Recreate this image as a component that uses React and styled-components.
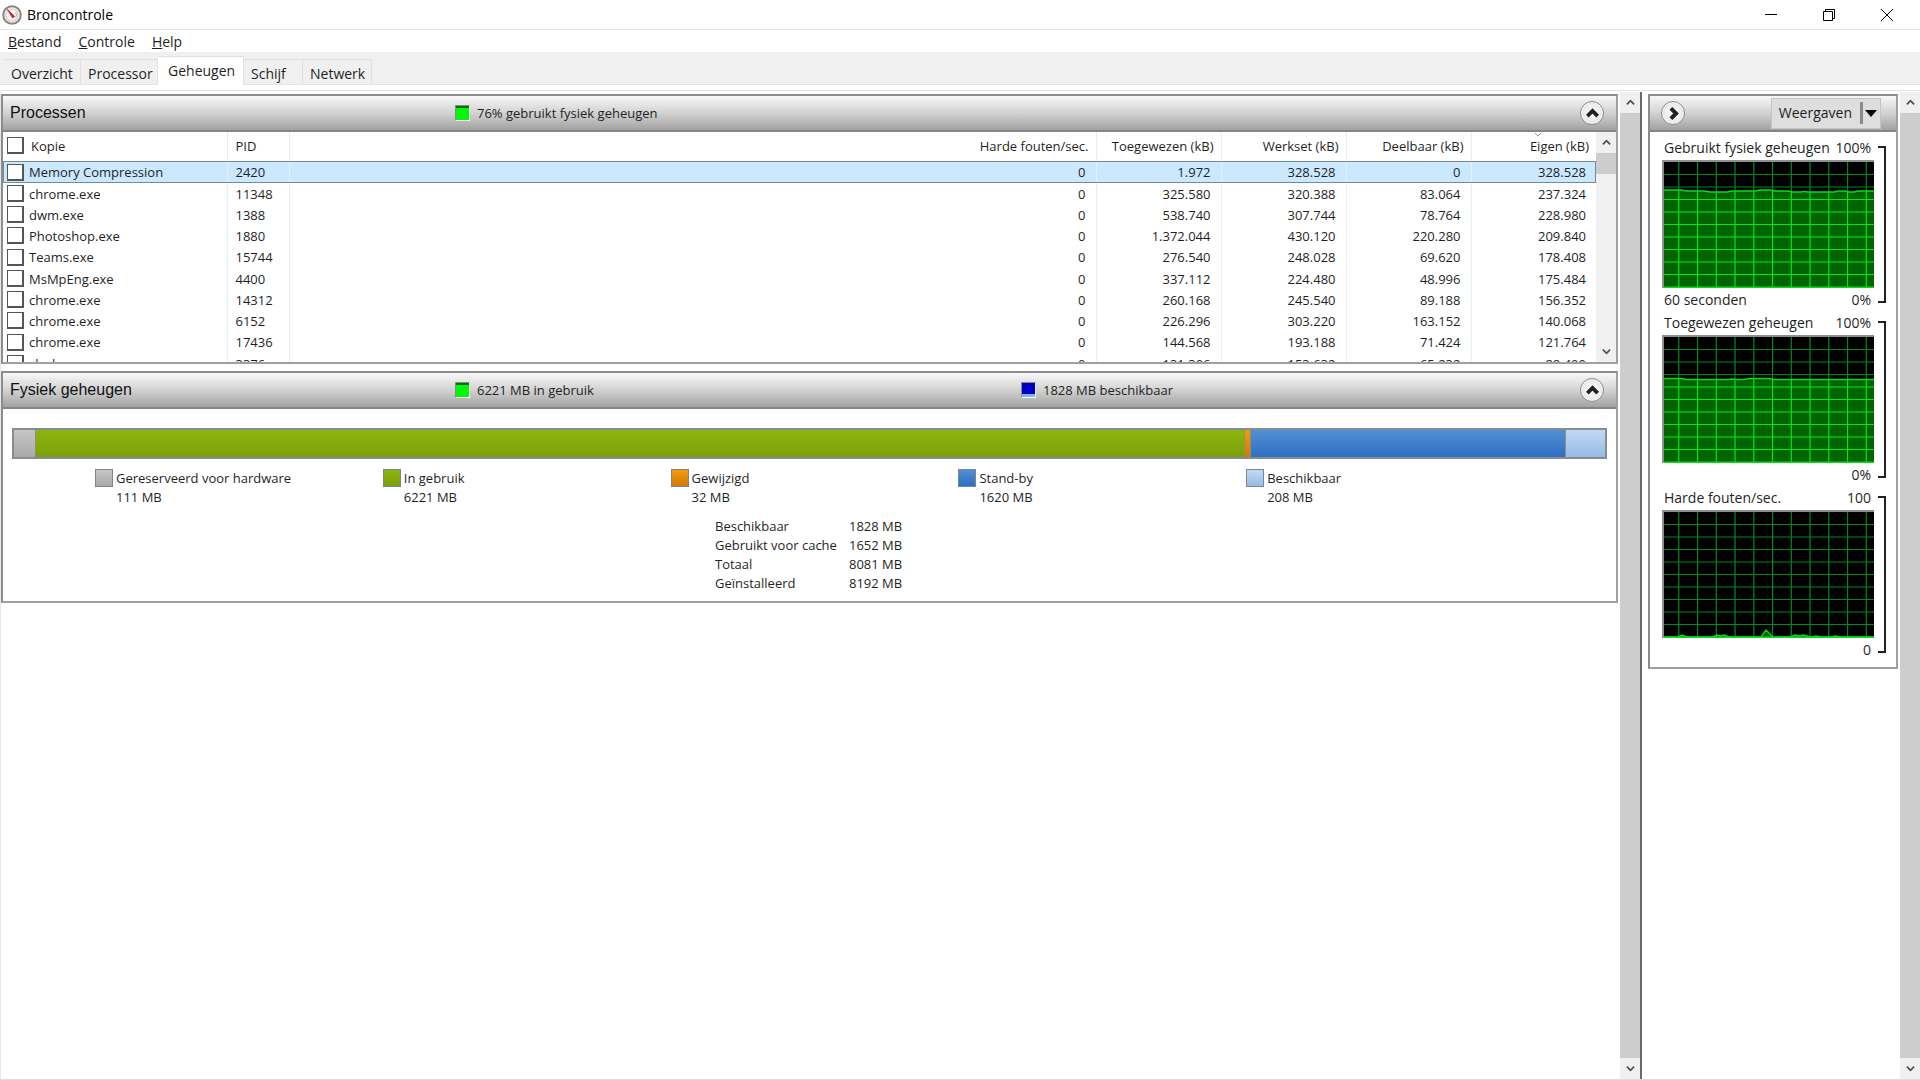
import React from "react";
import styled, { createGlobalStyle, css } from "styled-components";

const GlobalStyle = createGlobalStyle`
  * { box-sizing: border-box; }
  body {
    margin: 0;
    background: #fff;
    color: #1f1f1f;
    font: 14px/20px "Open Sans", "Noto Sans", sans-serif;
  }
  button { font: inherit; color: inherit; padding: 0; border: 0; background: none; }
  h2, p, dl, dd, dt, ul { margin: 0; padding: 0; }
`;

const Window = styled.div`
  display: flex;
  flex-direction: column;
  height: 100vh;
  overflow: hidden;
  border-bottom: 1px solid #dcdcdc;
`;

const TitleBar = styled.header`
  display: flex;
  align-items: center;
  height: 30px;
  padding: 0 4px 0 2px;
  border-bottom: 1px solid #dfe5e3;
  color: #000;
`;

const AppTitle = styled.span`
  flex: 1;
  margin-left: 5px;
`;

const WindowButton = styled.button`
  display: grid;
  place-items: center;
  width: 58px;
  height: 28px;
`;

const MenuBar = styled.nav`
  display: flex;
  align-items: flex-end;
  gap: 17px;
  height: 22px;
  padding-left: 8px;
`;

const MenuItem = styled.button`
  height: 20px;
  &::first-letter { text-decoration: underline; }
`;

const TabStrip = styled.div`
  display: flex;
  align-items: flex-end;
  height: 33px;
  padding-left: 4px;
  background: #f0f0f0;
  border-bottom: 1px solid #e3e3e3;
`;

const Tab = styled.button`
  width: ${(p) => p.$width}px;
  height: 25px;
  padding: 3px 0 0 7px;
  text-align: left;
  white-space: nowrap;
  border: 1px solid #e0e0e0;
  border-width: 1px 1px 0 0;
  ${(p) =>
    p.$active &&
    css`
      height: 29px;
      padding: 0 0 0 10px;
      margin-bottom: -1px;
      background: #fff;
    `}
`;

const Body = styled.main`
  display: flex;
  flex: 1;
  min-height: 0;
  margin-top: 5px;
  border-top: 1px solid #e4e4e4;
  padding-top: 1px;
`;

const Content = styled.div`
  display: flex;
  flex-direction: column;
  gap: 7px;
  flex: 1;
  min-width: 0;
  padding: 2px 2px 0 0;
  border-left: 1px solid #e8e8e8;
`;

const Sidebar = styled.aside`
  flex: none;
  width: 260px;
  padding: 2px 2px 0 6px;
  border-left: 2px solid #696969;
`;

const Panel = styled.section`
  border: 2px solid #8c8c8c;
  border-right-color: #a0a0a0;
  border-bottom-color: #a0a0a0;
`;

const PanelHeader = styled.div`
  display: flex;
  align-items: center;
  height: 36px;
  padding: 0 ${(p) => p.$right}px 0 ${(p) => p.$left}px;
  border-bottom: 2px solid #858585;
  background: linear-gradient(#f8f8f8, #d2d2d2 50%, #a2a2a2);
`;

const PanelTitle = styled.h2`
  flex: none;
  width: 445px;
  font: 16px/20px "Liberation Sans", Arial, sans-serif;
  color: #111;
`;

const Stat = styled.p`
  display: flex;
  align-items: center;
  gap: 7px;
  flex: 0 0 566px;
  font-size: 13px;
  &:last-of-type { flex: none; }
`;

const StatBox = styled.span`
  width: 15px;
  height: 16px;
  border: 1px solid #8a8a8a;
  border-right-color: #eee;
  border-bottom-color: #fff;
  background: ${(p) =>
    p.$kind === "used"
      ? "linear-gradient(#0a6a0a 2px, #00f808 2px)"
      : "linear-gradient(#0000c0 11px, #7db0ff 11px)"};
`;

const RoundButton = styled.button`
  display: grid;
  place-items: center;
  width: 24px;
  height: 24px;
  margin-left: ${(p) => (p.$end ? "auto" : "0")};
  border: 1px solid #8d8d8d;
  border-radius: 50%;
  background: radial-gradient(#fff, #dcdcdc);
  box-shadow: inset 0 0 0 1px #f4f4f4;
`;

const ProcessArea = styled.div`
  display: flex;
  height: 230px;
  overflow: hidden;
`;

const TableClip = styled.div`
  flex: 1;
  min-width: 0;
  overflow: hidden;
`;

const ProcessTable = styled.table`
  width: 100%;
  table-layout: fixed;
  border-collapse: collapse;
  font-size: 13px;
  line-height: 18px;
`;

const HeadCell = styled.th`
  position: relative;
  width: ${(p) => (p.$width ? `${p.$width}px` : "auto")};
  height: 29px;
  padding: ${(p) => (p.$num ? "0 7px 2px 0" : "0 0 2px 8px")};
  text-align: ${(p) => (p.$num ? "right" : "left")};
  font-weight: 400;
  white-space: nowrap;
  border-right: ${(p) => (p.$plain ? "0" : "1px solid #e6eeee")};
`;

const SortMark = styled.svg`
  position: absolute;
  top: 0;
  left: 50%;
`;

const Row = styled.tr`
  height: 21px;
  &:nth-child(4n + 1) { height: 22px; }
  ${(p) =>
    p.$selected &&
    css`
      background: #cce8ff;
      outline: 1px solid #718a9c;
      outline-offset: -1px;
    `}
`;

const Cell = styled.td`
  padding: ${(p) => (p.$num ? "0 10px 0 0" : "0 0 0 8px")};
  text-align: ${(p) => (p.$num ? "right" : "left")};
  white-space: nowrap;
  border-right: ${(p) => (p.$plain ? "0" : "1px solid #e6f1f1")};
`;

const CheckLabel = styled.label`
  display: flex;
  align-items: center;
  gap: ${(p) => p.$gap}px;
  margin-left: -4px;
`;

const Check = styled.input.attrs({ type: "checkbox" })`
  appearance: none;
  width: 17px;
  height: 17px;
  margin: 0;
  border: 2px solid #555;
  border-width: 1px 2px 2px 1px;
  background: #fff;
`;

const ScrollTrack = styled.div`
  display: flex;
  flex-direction: column;
  flex: none;
  width: 20px;
  background: #f0f0f0;
`;

const ScrollButton = styled.button`
  display: grid;
  place-items: center;
  flex: none;
  height: 21px;
`;

const ScrollThumb = styled.div`
  flex: ${(p) => (p.$size ? `0 0 ${p.$size}px` : "1")};
  background: #cdcdcd;
`;

const ScrollRest = styled.div`
  flex: 1;
`;

const MemoryBody = styled.div`
  padding: 19px 9px 8px;
  font-size: 13px;
  line-height: 19px;
`;

const MemoryBar = styled.div`
  display: flex;
  height: 31px;
  border: 2px solid #858c94;
`;

const fills = {
  reserved: "linear-gradient(#c6c6c6, #a9a9a9)",
  used: "linear-gradient(#8db510, #7ba008)",
  modified: "linear-gradient(#f59a0c, #cf7b05)",
  standby: "linear-gradient(#538fd6, #2f6fc0)",
  free: "linear-gradient(#c3d8f2, #96bbe6)",
};

const Segment = styled.div`
  flex: ${(p) => p.$share} 0 0;
  background: ${(p) => fills[p.$kind]};
  & + & { border-left: 1px solid #8a8f80; }
`;

const Legend = styled.ul`
  display: grid;
  grid-template-columns: repeat(5, 1fr);
  padding: 10px 73px 0 83px;
  list-style: none;
`;

const LegendItem = styled.li`
  display: flex;
  gap: 3px;
`;

const Swatch = styled.span`
  width: 18px;
  height: 18px;
  border: 1px solid #7d868e;
  background: ${(p) => fills[p.$kind]};
`;

const Totals = styled.dl`
  display: grid;
  grid-template-columns: 134px auto;
  justify-content: start;
  padding: 10px 0 0 703px;
`;

const ViewsButton = styled.button`
  display: flex;
  align-items: center;
  height: 31px;
  margin-left: auto;
  padding: 0 3px 0 7px;
  border: 1px solid #c4c4c4;
  background: #dedede;
`;

const ViewsDivider = styled.span`
  width: 3px;
  height: 22px;
  margin: 0 2px 0 8px;
  background: #8a8a8a;
`;

const Graphs = styled.div`
  display: flex;
  flex-direction: column;
  gap: 1px;
  padding: 6px 10px 5px 12px;
`;

const Graph = styled.figure`
  display: flex;
  justify-content: space-between;
  margin: 0;
`;

const GraphColumn = styled.div`
  width: 212px;
`;

const GraphLabels = styled.div`
  display: flex;
  justify-content: space-between;
  height: ${(p) => (p.$bottom ? 24 : 22)}px;
  padding: ${(p) => (p.$bottom ? "2px" : "0")} 3px 0 2px;
  white-space: nowrap;
`;

const GraphFrame = styled.div`
  border: 2px solid #8f8f8f;
  border-width: 2px 0 0 2px;
  svg { display: block; }
`;

const Bracket = styled.div`
  width: 8px;
  margin: 8px 0 9px;
  border: 2px solid #222;
  border-left: 0;
`;

const Chevron = ({ dir = "up", size = 9, weight = 2, color = "#505050" }) => {
  const paths = {
    up: "M1 7 L5 3 L9 7",
    down: "M1 3 L5 7 L9 3",
    right: "M3 1 L7 5 L3 9",
  };
  return (
    <svg width={size} height={size} viewBox="0 0 10 10" fill="none" stroke={color} strokeWidth={weight} aria-hidden="true">
      <path d={paths[dir]} />
    </svg>
  );
};

const AppIcon = () => (
  <svg width="20" height="20" viewBox="0 0 20 20" aria-hidden="true">
    <circle cx="10" cy="10" r="8.8" fill="#f1efee" stroke="#8c8683" strokeWidth="2" />
    <circle cx="10" cy="10" r="6" fill="#fff" stroke="#dccbc8" strokeWidth="1.2" />
    <path d="M5.5 4.5 L12.6 11.4 L10.6 13 Z" fill="#cf2430" stroke="#cf2430" strokeWidth="1" />
    <path d="M13.6 7.5 a4.4 4.4 0 0 1 0 5" fill="none" stroke="#c9a79c" strokeWidth="1" />
  </svg>
);

const Scrollbar = ({ thumb, name }) => (
  <ScrollTrack>
    <ScrollButton aria-label={`${name} omhoog`}><Chevron /></ScrollButton>
    <ScrollThumb $size={thumb} />
    {thumb && <ScrollRest />}
    <ScrollButton aria-label={`${name} omlaag`}><Chevron dir="down" /></ScrollButton>
  </ScrollTrack>
);

const gridX = Array.from({ length: 11 }, (_, i) => 14.8 + i * 18.75);
const gridY = Array.from({ length: 9 }, (_, i) => 12.5 * (i + 1));

const Plot = ({ id, line }) => {
  const area = `M0 125 L${line} L210 125 Z`;
  const grid = (color) => (
    <g stroke={color} strokeWidth="1.2">
      {gridX.map((x) => <line key={x} x1={x} x2={x} y1="0" y2="125" />)}
      {gridY.map((y) => <line key={`h${y}`} x1="0" x2="210" y1={y} y2={y} />)}
    </g>
  );
  return (
    <svg width="210" height="126" viewBox="0 0 210 126" aria-hidden="true">
      <clipPath id={id}><path d={area} /></clipPath>
      <rect width="210" height="126" fill="#000" />
      {grid("#008a22")}
      <g clipPath={`url(#${id})`}>
        <rect width="210" height="126" fill="#006400" />
        {grid("#06e41c")}
      </g>
      <path d={`M${line}`} fill="none" stroke="#06dc1c" strokeWidth="1.4" />
      <path d="M0 125.2 H210" stroke="#06dc1c" strokeWidth="1.4" />
    </svg>
  );
};

const tabs = [
  ["Overzicht", 77],
  ["Processor", 77],
  ["Geheugen", 86],
  ["Schijf", 59],
  ["Netwerk", 69],
];

const processes = [
  ["Memory Compression", "2420", "0", "1.972", "328.528", "0", "328.528"],
  ["chrome.exe", "11348", "0", "325.580", "320.388", "83.064", "237.324"],
  ["dwm.exe", "1388", "0", "538.740", "307.744", "78.764", "228.980"],
  ["Photoshop.exe", "1880", "0", "1.372.044", "430.120", "220.280", "209.840"],
  ["Teams.exe", "15744", "0", "276.540", "248.028", "69.620", "178.408"],
  ["MsMpEng.exe", "4400", "0", "337.112", "224.480", "48.996", "175.484"],
  ["chrome.exe", "14312", "0", "260.168", "245.540", "89.188", "156.352"],
  ["chrome.exe", "6152", "0", "226.296", "303.220", "163.152", "140.068"],
  ["chrome.exe", "17436", "0", "144.568", "193.188", "71.424", "121.764"],
  ["slack.exe", "3376", "0", "131.396", "153.632", "65.232", "88.400"],
];

const memory = [
  ["reserved", "Gereserveerd voor hardware", "111 MB", 21],
  ["used", "In gebruik", "6221 MB", 1211],
  ["modified", "Gewijzigd", "32 MB", 5],
  ["standby", "Stand-by", "1620 MB", 315],
  ["free", "Beschikbaar", "208 MB", 39],
];

const totals = [
  ["Beschikbaar", "1828 MB"],
  ["Gebruikt voor cache", "1652 MB"],
  ["Totaal", "8081 MB"],
  ["Geïnstalleerd", "8192 MB"],
];

const graphs = [
  {
    id: "used", title: "Gebruikt fysiek geheugen", max: "100%", note: "60 seconden", min: "0%",
    line: "0 28 L17 28 L23 29 L40 29 L46 30 L63 30 L68 29 L91 29 L96 28 L106 28 L110 29 L124 29 L129 30 L137 30 L140 29.4 L144 30 L170 30 L174 29 L181 29 L185 30 L190 30 L194 29 L210 29",
  },
  {
    id: "commit", title: "Toegewezen geheugen", max: "100%", note: "", min: "0%",
    line: "0 41.5 L18 41.5 L22 42.5 L64 42.5 L68 42 L73 42.5 L80 42.5 L85 41.5 L105 41.5 L109 42.5 L210 42.5",
  },
  {
    id: "faults", title: "Harde fouten/sec.", max: "100", note: "", min: "0",
    line: "0 125 L14 125 L18 123 L23 125 L49 125 L53 123 L57 124 L60 123 L65 125 L97 125 L102 118 L109 125 L126 125 L131 123 L135 124 L139 123 L147 125 L152 124 L158 125 L167 125 L171 124 L177 125 L210 125",
  },
];

export default function App() {
  return (
    <Window>
      <GlobalStyle />
      <TitleBar>
        <AppIcon />
        <AppTitle>Broncontrole</AppTitle>
        <WindowButton aria-label="Minimaliseren">
          <svg width="12" height="12" viewBox="0 0 12 12" stroke="#000"><path d="M0 5.5 H12" /></svg>
        </WindowButton>
        <WindowButton aria-label="Vorig formaat">
          <svg width="12" height="12" viewBox="0 0 12 12" fill="none" stroke="#000">
            <path d="M0.5 2.5 H9.5 V11.5 H0.5 Z M2.5 2.5 V0.5 H11.5 V9.5 H9.5" />
          </svg>
        </WindowButton>
        <WindowButton aria-label="Sluiten">
          <svg width="12" height="12" viewBox="0 0 12 12" stroke="#000"><path d="M0 0 L12 12 M12 0 L0 12" /></svg>
        </WindowButton>
      </TitleBar>
      <MenuBar>
        <MenuItem>Bestand</MenuItem>
        <MenuItem>Controle</MenuItem>
        <MenuItem>Help</MenuItem>
      </MenuBar>
      <TabStrip role="tablist">
        {tabs.map(([name, width]) => (
          <Tab key={name} role="tab" aria-selected={name === "Geheugen"} $width={width} $active={name === "Geheugen"}>
            {name}
          </Tab>
        ))}
      </TabStrip>
      <Body>
        <Content>
          <Panel>
            <PanelHeader $left={7} $right={12}>
              <PanelTitle>Processen</PanelTitle>
              <Stat><StatBox $kind="used" />76% gebruikt fysiek geheugen</Stat>
              <RoundButton $end aria-label="Processen inklappen">
                <Chevron size={13} weight={3} color="#222" />
              </RoundButton>
            </PanelHeader>
            <ProcessArea>
              <TableClip>
                <ProcessTable>
                  <thead>
                    <tr>
                      <HeadCell $width={224}>
                        <CheckLabel $gap={7}><Check />Kopie</CheckLabel>
                      </HeadCell>
                      <HeadCell $width={62}>PID</HeadCell>
                      <HeadCell $num>Harde fouten/sec.</HeadCell>
                      <HeadCell $num $width={125}>Toegewezen (kB)</HeadCell>
                      <HeadCell $num $width={125}>Werkset (kB)</HeadCell>
                      <HeadCell $num $width={125}>Deelbaar (kB)</HeadCell>
                      <HeadCell $num $plain $width={125}>
                        <SortMark width="8" height="5" viewBox="0 0 8 5" fill="none" stroke="#999" aria-hidden="true">
                          <path d="M1 1 L4 4 L7 1" />
                        </SortMark>
                        Eigen (kB)
                      </HeadCell>
                    </tr>
                  </thead>
                  <tbody>
                    {processes.map(([name, pid, ...values], i) => (
                      <Row key={pid} $selected={i === 0}>
                        <Cell><CheckLabel $gap={5}><Check />{name}</CheckLabel></Cell>
                        <Cell>{pid}</Cell>
                        {values.map((v, n) => (
                          <Cell key={n} $num $plain={n === values.length - 1}>{v}</Cell>
                        ))}
                      </Row>
                    ))}
                  </tbody>
                </ProcessTable>
              </TableClip>
              <Scrollbar thumb={21} name="Processen" />
            </ProcessArea>
          </Panel>
          <Panel>
            <PanelHeader $left={7} $right={12}>
              <PanelTitle>Fysiek geheugen</PanelTitle>
              <Stat><StatBox $kind="used" />6221 MB in gebruik</Stat>
              <Stat><StatBox $kind="available" />1828 MB beschikbaar</Stat>
              <RoundButton $end aria-label="Fysiek geheugen inklappen">
                <Chevron size={13} weight={3} color="#222" />
              </RoundButton>
            </PanelHeader>
            <MemoryBody>
              <MemoryBar>
                {memory.map(([kind, , , share]) => <Segment key={kind} $kind={kind} $share={share} />)}
              </MemoryBar>
              <Legend>
                {memory.map(([kind, label, amount]) => (
                  <LegendItem key={kind}>
                    <Swatch $kind={kind} />
                    <div><p>{label}</p><p>{amount}</p></div>
                  </LegendItem>
                ))}
              </Legend>
              <Totals>
                {totals.map(([label, amount]) => (
                  <React.Fragment key={label}><dt>{label}</dt><dd>{amount}</dd></React.Fragment>
                ))}
              </Totals>
            </MemoryBody>
          </Panel>
        </Content>
        <Scrollbar name="Inhoud" />
        <Sidebar>
          <Panel>
            <PanelHeader $left={11} $right={15}>
              <RoundButton aria-label="Grafieken verbergen">
                <Chevron dir="right" size={13} weight={3} color="#222" />
              </RoundButton>
              <ViewsButton>
                Weergaven
                <ViewsDivider />
                <svg width="12" height="7" viewBox="0 0 12 7" aria-hidden="true"><path d="M0 0 H12 L6 7 Z" fill="#000" /></svg>
              </ViewsButton>
            </PanelHeader>
            <Graphs>
              {graphs.map((g) => (
                <Graph key={g.id}>
                  <GraphColumn>
                    <GraphLabels><span>{g.title}</span><span>{g.max}</span></GraphLabels>
                    <GraphFrame><Plot id={g.id} line={g.line} /></GraphFrame>
                    <GraphLabels $bottom><span>{g.note}</span><span>{g.min}</span></GraphLabels>
                  </GraphColumn>
                  <Bracket />
                </Graph>
              ))}
            </Graphs>
          </Panel>
        </Sidebar>
        <Scrollbar name="Grafieken" />
      </Body>
    </Window>
  );
}
